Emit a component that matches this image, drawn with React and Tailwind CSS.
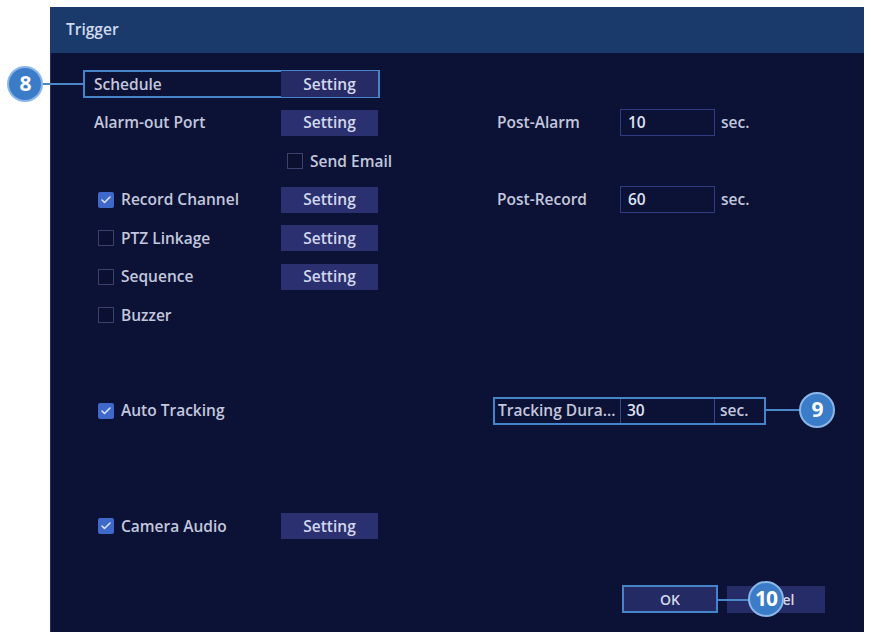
import React from 'react';
import { Check } from 'lucide-react';

const font = { fontFamily: '"Open Sans", "Noto Sans", sans-serif' };

const SettingButton = ({ highlight }) => (
  <button
    className={`w-[97px] h-[26px] flex items-center justify-center text-[15.5px] font-semibold text-[#d4d8ec] ${
      highlight ? 'bg-[#262b66]' : 'bg-[#2a3070]'
    }`}
  >
    Setting
  </button>
);

const Checkbox = ({ checked }) =>
  checked ? (
    <span className="w-[16px] h-[16px] rounded-[2px] bg-[#3e68c9] flex items-center justify-center">
      <Check size={12} strokeWidth={3} className="text-[#dfe6fb]" />
    </span>
  ) : (
    <span className="w-[16px] h-[16px] border border-[#3b416c] bg-[#0b1030]" />
  );

const CheckLabel = ({ checked, label }) => (
  <div className="w-[198px] flex items-center gap-[7px] pl-[15px]">
    <Checkbox checked={checked} />
    <span>{label}</span>
  </div>
);

const SecField = ({ label, value }) => (
  <div className="flex items-center">
    <span className="w-[127px] pl-[4px]">{label}</span>
    <span className="w-[95px] h-[27px] border border-[#323c82] bg-[#0c1236] flex items-center pl-[7px] text-[#dfe2f2]">
      {value}
    </span>
    <span className="pl-[6px]">sec.</span>
  </div>
);

const Callout = ({ n, className }) => (
  <div
    className={`absolute w-[36px] h-[36px] rounded-full bg-[#3b7cc8] border-2 border-[#8ab6e8] flex items-center justify-center text-white text-[21px] font-bold tracking-[-1px] ${className}`}
  >
    {n}
  </div>
);

export default function App() {
  return (
    <div className="min-h-screen bg-white pt-[7px] pl-[50px] relative" style={font}>
      <div className="w-[814px] h-[625px] bg-[#0c1236] border-l border-[#2a3264] flex flex-col text-[15.5px] font-semibold text-[#c3c7dd]">
        <div className="h-[46px] bg-[#1b3a6c] flex items-center pl-[15px] text-[15.5px] font-semibold text-[#d0d9ee]">
          Trigger
        </div>

        <div className="flex-1 flex flex-col pt-[12px] pl-[32px]">
          {/* Schedule row, outlined */}
          <div className="h-[38.5px] flex items-center">
            <div className="flex items-center border-2 border-[#4584c9] h-[28px]">
              <span className="w-[196px] pl-[9px]">Schedule</span>
              <SettingButton highlight />
            </div>
          </div>

          <div className="h-[38.5px] flex items-center">
            <span className="w-[198px] pl-[11px]">Alarm-out Port</span>
            <SettingButton />
            <div className="ml-[115px]">
              <SecField label="Post-Alarm" value="10" />
            </div>
          </div>

          <div className="h-[38.5px] flex items-center">
            <div className="w-[198px]" />
            <div className="flex items-center gap-[7px] pl-[6px]">
              <Checkbox />
              <span>Send Email</span>
            </div>
          </div>

          <div className="h-[38.5px] flex items-center">
            <CheckLabel checked label="Record Channel" />
            <SettingButton />
            <div className="ml-[115px]">
              <SecField label="Post-Record" value="60" />
            </div>
          </div>

          <div className="h-[38.5px] flex items-center">
            <CheckLabel label="PTZ Linkage" />
            <SettingButton />
          </div>

          <div className="h-[38.5px] flex items-center">
            <CheckLabel label="Sequence" />
            <SettingButton />
          </div>

          <div className="h-[38.5px] flex items-center">
            <CheckLabel label="Buzzer" />
          </div>

          <div className="h-[38.5px] mt-[57px] flex items-center">
            <CheckLabel checked label="Auto Tracking" />
            <div className="ml-[212px] flex items-center h-[28px] border-2 border-[#4584c9]">
              <span className="w-[126px] pl-[3px] h-full flex items-center border-r border-[#34488a] whitespace-nowrap overflow-hidden">
                Tracking Dura...
              </span>
              <span className="w-[94px] pl-[6px] h-full flex items-center text-[#dfe2f2] border-r border-[#34488a]">
                30
              </span>
              <span className="w-[49px] pl-[5px]">sec.</span>
            </div>
          </div>

          <div className="h-[38.5px] mt-[77px] flex items-center">
            <CheckLabel checked label="Camera Audio" />
            <SettingButton />
          </div>

          <div className="flex-1" />

          <div className="flex justify-end items-center gap-[9px] pr-[39px] pb-[19px]">
            <button className="w-[96px] h-[28px] bg-[#242a64] border-2 border-[#4584c9] text-[14px] font-semibold text-[#d4d8ec]">
              OK
            </button>
            <button className="w-[98px] h-[27px] pr-[8px] bg-[#262c68] text-[14px] font-semibold text-[#d4d8ec]">
              Cancel
            </button>
          </div>
        </div>
      </div>

      {/* callout markers */}
      <div className="absolute left-[41px] top-[83px] w-[42px] h-[2px] bg-[#4b86c9]" />
      <Callout n="8" className="left-[7px] top-[66px]" />

      <div className="absolute left-[764px] top-[409px] w-[38px] h-[2px] bg-[#4b86c9]" />
      <Callout n="9" className="left-[799px] top-[392px]" />

      <div className="absolute left-[717px] top-[599px] w-[32px] h-[2px] bg-[#4b86c9]" />
      <Callout n="10" className="left-[748px] top-[581px]" />
    </div>
  );
}
